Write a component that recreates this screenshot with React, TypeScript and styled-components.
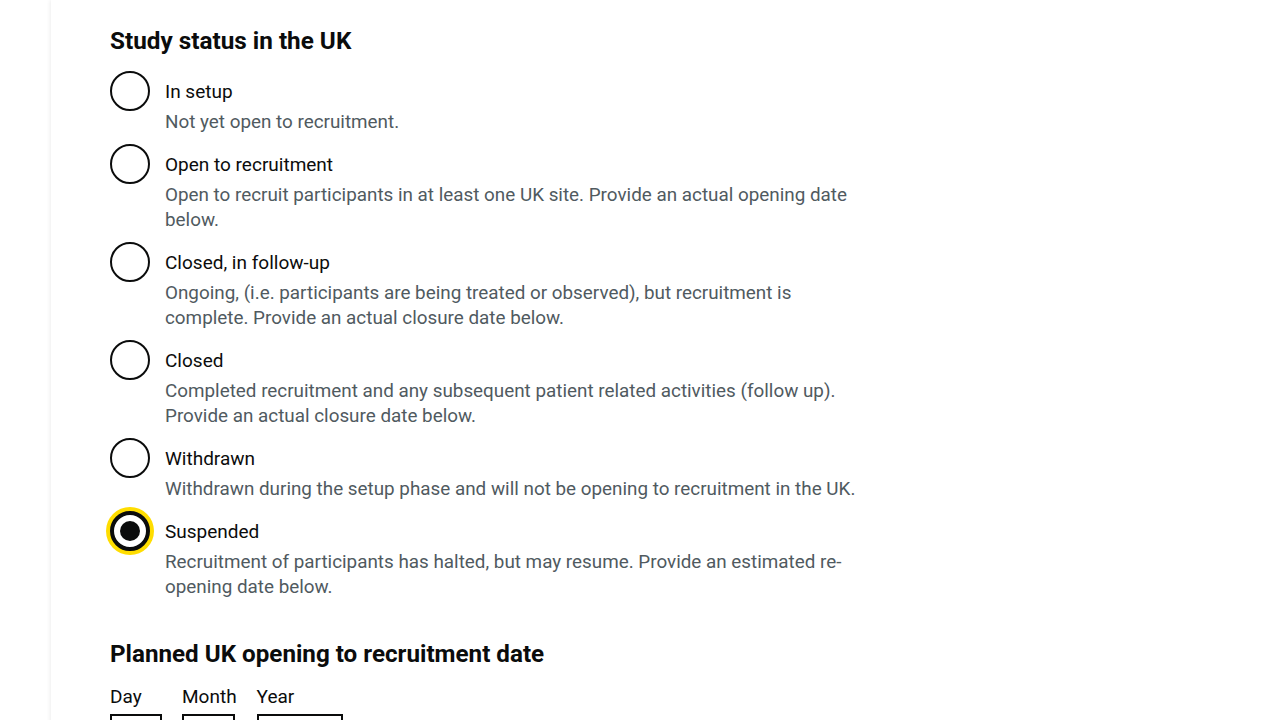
import React from "react";
import styled, { createGlobalStyle } from "styled-components";

const Global = createGlobalStyle`
  html, body { margin: 0; padding: 0; background: #ffffff; }
  body { font-family: Roboto, "Noto Sans", Arial, sans-serif; color: #0b0c0c; overflow: hidden; }
  * { box-sizing: border-box; }
`;

const Page = styled.div`
  display: flex;
  min-height: 720px;
`;

const Gutter = styled.div`
  width: 51px;
  flex: none;
`;

const Main = styled.main`
  flex: 1;
  background: #ffffff;
  box-shadow: -1px 0 4px rgba(0, 0, 0, 0.07);
  padding: 26px 0 0 59px;
`;

const Fieldset = styled.fieldset`
  border: 0;
  margin: 0 0 30px;
  padding: 0;
  width: 770px;
`;

const Legend = styled.legend`
  padding: 0;
  margin: 0 0 15px;
  font-size: 24.3px;
  line-height: 30px;
  font-weight: 700;
`;

const Item = styled.div`
  position: relative;
  min-height: 40px;
  padding-left: 40px;
  margin-bottom: 10px;
`;

const Circle = styled.span<{ $checked?: boolean }>`
  position: absolute;
  left: 0;
  top: 0;
  width: 40px;
  height: 40px;
  border-radius: 50%;
  border: ${(p) => (p.$checked ? "4px" : "2px")} solid #0b0c0c;
  background: #fff;
  box-shadow: ${(p) => (p.$checked ? "0 0 0 4px #ffdd00" : "none")};
  display: flex;
  align-items: center;
  justify-content: center;
`;

const Dot = styled.span`
  width: 20px;
  height: 20px;
  border-radius: 50%;
  background: #0b0c0c;
`;

const Label = styled.label`
  display: block;
  padding: 8px 15px 5px;
  font-size: 19px;
  line-height: 25px;
  color: #0b0c0c;
`;

const Hint = styled.div`
  padding: 1px 15px 0;
  margin-bottom: -1px;
  font-size: 18.85px;
  line-height: 25px;
  color: #505a5f;
`;

const Heading = styled.h2`
  margin: 0 0 15px;
  font-size: 24.2px;
  line-height: 30px;
  font-weight: 700;
`;

const DateRow = styled.div`
  display: flex;
  gap: 20px;
`;

const DateItem = styled.div`
  display: flex;
  flex-direction: column;
`;

const DateLabel = styled.label`
  font-size: 19px;
  line-height: 25px;
  margin-bottom: 5px;
`;

const DateInput = styled.input<{ $w: number }>`
  width: ${(p) => p.$w}px;
  height: 40px;
  border: 2px solid #0b0c0c;
  border-radius: 0;
  font-size: 19px;
  font-family: inherit;
  padding: 5px;
`;

const options = [
  { label: "In setup", hint: "Not yet open to recruitment." },
  {
    label: "Open to recruitment",
    hint: "Open to recruit participants in at least one UK site. Provide an actual opening date below.",
  },
  {
    label: "Closed, in follow-up",
    hint: "Ongoing, (i.e. participants are being treated or observed), but recruitment is complete. Provide an actual closure date below.",
  },
  {
    label: "Closed",
    hint: "Completed recruitment and any subsequent patient related activities (follow up). Provide an actual closure date below.",
  },
  {
    label: "Withdrawn",
    hint: "Withdrawn during the setup phase and will not be opening to recruitment in the UK.",
  },
  {
    label: "Suspended",
    hint: "Recruitment of participants has halted, but may resume. Provide an estimated re-opening date below.",
    checked: true,
  },
];

export default function App() {
  return (
    <>
      <Global />
      <Page>
        <Gutter />
        <Main>
          <Fieldset>
            <Legend>Study status in the UK</Legend>
            {options.map((o) => (
              <Item key={o.label}>
                <Circle $checked={o.checked}>{o.checked && <Dot />}</Circle>
                <Label>{o.label}</Label>
                <Hint>{o.hint}</Hint>
              </Item>
            ))}
          </Fieldset>
          <Heading>Planned UK opening to recruitment date</Heading>
          <DateRow>
            <DateItem>
              <DateLabel>Day</DateLabel>
              <DateInput $w={52} />
            </DateItem>
            <DateItem>
              <DateLabel>Month</DateLabel>
              <DateInput $w={53} />
            </DateItem>
            <DateItem>
              <DateLabel>Year</DateLabel>
              <DateInput $w={86} />
            </DateItem>
          </DateRow>
        </Main>
      </Page>
    </>
  );
}
